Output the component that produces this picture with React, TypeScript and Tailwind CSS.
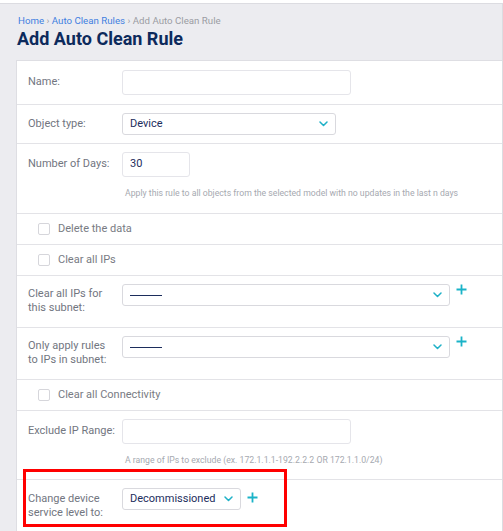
import type { ReactNode } from "react";

const Chevron = () => (
  <svg width="9" height="6" viewBox="0 0 9 6" fill="none" className="shrink-0">
    <path d="M1 1l3.5 3.5L8 1" stroke="#1fb1c7" strokeWidth="1.5" strokeLinecap="round" strokeLinejoin="round" />
  </svg>
);

const Plus = () => (
  <svg width="11" height="11" viewBox="0 0 11 11" className="shrink-0">
    <path d="M5.5 0.5v10M0.5 5.5h10" stroke="#1ab3c8" strokeWidth="1.8" />
  </svg>
);

interface RowProps {
  label?: string;
  labelOffset?: string;
  className: string;
  children: ReactNode;
}

const Row = ({ label, labelOffset = "mt-[4px]", className, children }: RowProps) => (
  <div className={`flex items-start border-b border-[#e3e3e7] pl-[11px] ${className}`}>
    <div className="w-[94px] shrink-0">
      <div className={`w-[89px] text-[11px] leading-[14px] text-[#72767f] ${labelOffset}`}>{label}</div>
    </div>
    <div className="flex-1">{children}</div>
  </div>
);

const CheckRow = ({ label }: { label: string }) => (
  <div className="flex h-[31px] items-center border-b border-[#e3e3e7] pl-[21px]">
    <span className="h-[12px] w-[12px] rounded-[2px] border border-[#d6d6db] bg-white" />
    <span className="ml-[8px] text-[11px] text-[#787b83]">{label}</span>
  </div>
);

const TextInput = ({ width, value }: { width: string; value?: string }) => (
  <div className={`flex h-[25px] items-center rounded-[3px] border border-[#e5e5ea] bg-white px-[7px] text-[11px] text-[#1c2d5c] ${width}`}>
    {value}
  </div>
);

const Select = ({ width, value, empty }: { width: string; value?: string; empty?: boolean }) => (
  <div className={`flex h-[22px] items-center justify-between rounded-[3px] border border-[#d9d9de] bg-white pl-[7px] pr-[7px] text-[11px] text-[#1c2d5c] ${width}`}>
    {empty ? <span className="h-px w-[32px] bg-[#1c2d5c]" /> : <span>{value}</span>}
    <Chevron />
  </div>
);

const Hint = ({ children }: { children: ReactNode }) => (
  <div className="ml-[3px] mt-[10px] whitespace-nowrap text-[8.7px] leading-[12px] text-[#a6a9b0]">{children}</div>
);

export default function App() {
  return (
    <div className="h-[531px] overflow-hidden bg-white font-['Roboto',sans-serif]">
      <div className="mt-[3px] h-[528px] border-t border-r border-[#dcdce1] bg-[#ececf0]">
        <div className="px-[18px] pt-[10px]">
          <div className="text-[9.7px] leading-[14px] text-[#9b9ca3]">
            <span className="text-[#3f7fe0]">Home</span> › <span className="text-[#3f7fe0]">Auto Clean Rules</span> › Add Auto Clean Rule
          </div>
          <h1 className="-ml-[1px] text-[18px] font-bold leading-[22px] text-[#0c2a5c]">Add Auto Clean Rule</h1>
        </div>

        <div className="relative ml-4 mt-[10px] h-[480px] border-t border-l border-[#dedee3] bg-white">
          <Row label="Name:" className="h-[44px] pt-[9px]" labelOffset="mt-[5px]">
            <TextInput width="w-[229px]" />
          </Row>
          <Row label="Object type:" className="h-[39px] pt-[8px]" labelOffset="mt-[4px]">
            <Select width="w-[214px]" value="Device" />
          </Row>
          <Row label="Number of Days:" className="h-[70px] pt-[8px]" labelOffset="mt-[5px]">
            <TextInput width="w-[68px]" value="30" />
            <Hint>Apply this rule to all objects from the selected model with no updates in the last n days</Hint>
          </Row>
          <CheckRow label="Delete the data" />
          <CheckRow label="Clear all IPs" />
          <Row label="Clear all IPs for this subnet:" className="h-[52px] pt-[8px]" labelOffset="mt-[3px]">
            <div className="flex items-start gap-[6px]">
              <Select width="w-[328px]" empty />
              <Plus />
            </div>
          </Row>
          <Row label="Only apply rules to IPs in subnet:" className="h-[52px] pt-[8px]" labelOffset="mt-[3px]">
            <div className="flex items-start gap-[6px]">
              <Select width="w-[328px]" empty />
              <Plus />
            </div>
          </Row>
          <CheckRow label="Clear all Connectivity" />
          <Row label="Exclude IP Range:" className="h-[69px] pt-[8px]" labelOffset="mt-[5px]">
            <TextInput width="w-[229px]" />
            <Hint>A range of IPs to exclude (ex. 172.1.1.1-192.2.2.2 OR 172.1.1.0/24)</Hint>
          </Row>
          <Row label="Change device service level to:" className="border-b-0 pt-[8px]" labelOffset="mt-[4px]">
            <div className="flex items-start gap-[6px]">
              <Select width="w-[119px]" value="Decommissioned" />
              <div className="mt-[4px]">
                <Plus />
              </div>
            </div>
          </Row>

          {/* highlight frame around the service level field */}
          <div className="pointer-events-none absolute left-[6px] top-[408px] h-[58px] w-[264px] border-[3px] border-[#ff0000]" />
        </div>
      </div>
    </div>
  );
}
